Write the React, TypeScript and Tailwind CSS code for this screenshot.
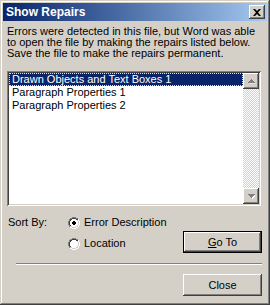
import React from 'react';

const font = { fontFamily: '"Liberation Sans", Arial, sans-serif' };

const raised =
  'shadow-[inset_-1px_-1px_#404040,inset_1px_1px_#ffffff,inset_-2px_-2px_#808080,inset_2px_2px_#d4d0c8]';

const Radio = ({ checked }: { checked?: boolean }) => (
  <svg width="12" height="12" viewBox="0 0 12 12" className="shrink-0">
    <path d="M4 0h4v1h2v1h1v2h1v4h-1v-2h0" fill="none" />
    {/* outer dark-gray top-left arc */}
    <path d="M4 0h4v1H4zM2 1h2v1H2zM8 1h2v1H8zM1 2h1v2H1zM0 4h1v4H0zM1 8h1v2H1z" fill="#808080" />
    {/* inner black top-left arc */}
    <path d="M4 1h4v1H4zM2 2h2v1H2zM8 2h2v1H8zM2 3h1v1H2zM1 4h1v4H1zM2 8h1v1H2z" fill="#404040" />
    {/* white bottom-right arc */}
    <path d="M10 2h1v2h-1zM11 4h1v4h-1zM10 8h1v2h-1zM8 10h2v1H8zM2 10h2v1H2zM4 11h4v1H4z" fill="#ffffff" />
    {/* light gray inner bottom-right */}
    <path d="M9 3h1v1H9zM10 4h1v4h-1zM9 8h1v1H9zM8 9h2v1H8zM2 9h2v1H2zM4 10h4v1H4z" fill="#d4d0c8" />
    {/* white face */}
    <path d="M4 2h4v1h1v1h1v4H9v1H8v1H4V9H3V8H2V4h1V3h1z" fill="#ffffff" />
    {checked && <path d="M5 4h2v1h1v2H7v1H5V7H4V5h1z" fill="#000000" />}
  </svg>
);

const ScrollArrow = ({ up }: { up?: boolean }) => (
  <div className={`w-[16px] h-[16px] bg-[#d4d0c8] flex items-center justify-center ${raised}`}>
    <svg width="7" height="5" viewBox="0 0 7 5">
      {up ? (
        <>
          <path d="M4 1h1v1h1v1h1v1H1V3h1V2h1V1h1z" fill="#ffffff" transform="translate(0.5 0.5)" />
          <path d="M3 0h1v1h1v1h1v1h1v1H0V3h1V2h1V1h1z" fill="#808080" />
        </>
      ) : (
        <>
          <path d="M1 1h7v1H7v1H6v1H5v1H4V4H3V3H2V2H1z" fill="#ffffff" />
          <path d="M0 0h7v1H6v1H5v1H4v1H3V3H2V2H1V1H0z" fill="#808080" />
        </>
      )}
    </svg>
  </div>
);

const Button = ({ children, focused }: { children: React.ReactNode; focused?: boolean }) => (
  <div
    className={`w-[79px] h-[22px] bg-[#d4d0c8] flex items-center justify-center text-[11px] text-black ${
      focused
        ? 'shadow-[inset_0_0_0_1px_#000000,inset_-2px_-2px_#404040,inset_2px_2px_#ffffff,inset_-3px_-3px_#808080]'
        : raised
    }`}
  >
    {children}
  </div>
);

const App: React.FC = () => {
  const items = ['Drawn Objects and Text Boxes 1', 'Paragraph Properties 1', 'Paragraph Properties 2'];

  return (
    <div
      style={font}
      className="w-[270px] h-[305px] bg-[#d4d0c8] p-[3px] flex flex-col text-[11px] text-black shadow-[inset_-1px_-1px_#404040,inset_1px_1px_#d4d0c8,inset_-2px_-2px_#808080,inset_2px_2px_#ffffff]"
    >
      {/* Title bar */}
      <div className="h-[18px] flex items-center bg-gradient-to-r from-[#0a246a] to-[#a6caf0] pl-[3px] pr-[2px]">
        <span className="text-white font-bold text-[12px] leading-none">Show Repairs</span>
        <div className={`ml-auto w-[16px] h-[14px] bg-[#d4d0c8] flex items-center justify-center ${raised}`}>
          <svg width="8" height="7" viewBox="0 0 8 7">
            <path d="M0 0h2l2 2 2-2h2L5 3.5 8 7H6L4 5 2 7H0l3-3.5z" fill="#000000" />
          </svg>
        </div>
      </div>

      {/* Message */}
      <p className="pt-[5px] px-[4px] leading-[11px]">
        Errors were detected in this file, but Word was able
        <br />
        to open the file by making the repairs listed below.
        <br />
        Save the file to make the repairs permanent.
      </p>

      {/* List box */}
      <div className="mt-[12px] ml-[4px] w-[254px] h-[135px] bg-white p-[2px] flex shadow-[inset_1px_1px_#808080,inset_-1px_-1px_#ffffff,inset_2px_2px_#404040,inset_-2px_-2px_#d4d0c8]">
        <div className="flex-1 flex flex-col">
          {items.map((item, i) => (
            <div
              key={item}
              className={`h-[13px] leading-[11px] pl-[2px] ${
                i === 0
                  ? 'bg-[#0a246a] text-white border border-dotted border-[#e8e890]'
                  : 'border border-transparent'
              }`}
            >
              {item}
            </div>
          ))}
        </div>
        <div className="w-[16px] flex flex-col">
          <ScrollArrow up />
          <div className="flex-1 bg-[repeating-conic-gradient(#d4d0c8_0%_25%,#ffffff_0%_50%)] bg-[length:2px_2px]" />
          <ScrollArrow />
        </div>
      </div>

      {/* Sort options */}
      <div className="flex items-start mt-[10px] pl-[5px] pr-[5px]">
        <div className="w-[60px] h-[13px] leading-[13px]">Sort By:</div>
        <div className="flex flex-col gap-[8px]">
          <div className="flex items-center gap-[4px] h-[13px]">
            <Radio checked />
            <span>Error Description</span>
          </div>
          <div className="flex items-center gap-[4px] h-[13px]">
            <Radio />
            <span>Location</span>
          </div>
        </div>
        <div className="ml-auto mt-[15px]">
          <Button focused>
            <span>
              <span className="underline">G</span>o To
            </span>
          </Button>
        </div>
      </div>

      {/* Separator */}
      <div className="mt-[10px] ml-[13px] mr-[5px] h-[2px] border-t border-[#808080] border-b border-b-white" />

      {/* Close */}
      <div className="flex justify-end mt-[9px] pr-[5px]">
        <Button>Close</Button>
      </div>
    </div>
  );
};

export default App;
